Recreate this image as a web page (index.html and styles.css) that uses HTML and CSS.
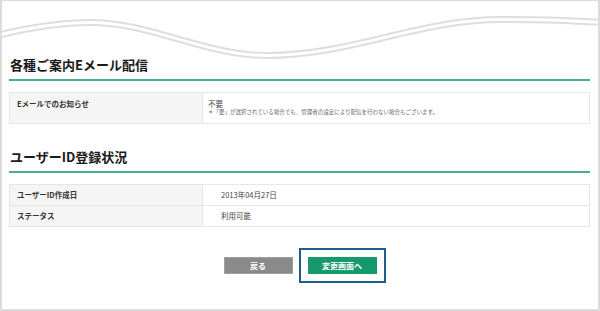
FILE: index.html
```html
<!DOCTYPE html>
<html lang="ja">
<head>
  <meta charset="UTF-8">
  <title>登録情報</title>
  <meta name="viewport" content="width=device-width, initial-scale=1">
  <link rel="stylesheet" href="styles.css">
</head>
<body>
  <div class="frame">
    <svg class="wave" viewBox="2 1 596 55" preserveAspectRatio="none" aria-hidden="true">
      <path d="M0,32 C30,25 60,20 90,20 C150,20 205,53 267,53 C350,53 420,17 500,17 C540,17 575,18 600,20" />
      <path d="M0,37.5 C30,30 60,25 90,25 C150,25 205,58 267,58 C350,58 420,22 500,22 C540,22 575,23 600,25" />
    </svg>

    <section class="block">
      <h2 class="heading">各種ご案内Eメール配信</h2>
      <table class="info mail">
        <tr>
          <th>Eメールでのお知らせ</th>
          <td>
            <p class="val">不要</p>
            <p class="note">＊「要」が選択されている場合でも、管理者の設定により配信を行わない場合もございます。</p>
          </td>
        </tr>
      </table>
    </section>

    <section class="block second">
      <h2 class="heading">ユーザーID登録状況</h2>
      <table class="info status">
        <tr>
          <th>ユーザーID作成日</th>
          <td>2013年04月27日</td>
        </tr>
        <tr>
          <th>ステータス</th>
          <td>利用可能</td>
        </tr>
      </table>
    </section>

    <div class="actions">
      <button class="btn back" type="button">戻る</button>
      <button class="btn next" type="button">変更画面へ</button>
    </div>
  </div>
</body>
</html>
```

FILE: styles.css
```css
body {
  margin: 0;
  font-family: "Noto Sans CJK JP", "Noto Sans", sans-serif;
  color: #222;
  background: #fff;
}
.frame {
  width: 600px;
  height: 311px;
  box-sizing: border-box;
  border: 2px solid #dcdcdc;
  border-top-width: 1px;
  overflow: hidden;
}
.wave {
  display: block;
  width: 596px;
  height: 55px;
  overflow: visible;
}
.wave path {
  fill: none;
  stroke: #dedede;
  stroke-width: 2;
}
.block {
  padding: 0 8px 0 7px;
}
.second {
  margin-top: 24px;
}
.heading {
  margin: 0;
  padding: 0 0 5px 1px;
  font-size: 13px;
  line-height: 18px;
  font-weight: 700;
  color: #1a1a1a;
  border-bottom: 2px solid #45ae8c;
}
.info {
  width: 100%;
  margin-top: 11px;
  border-collapse: collapse;
  font-size: 7.5px;
}
.info th,
.info td {
  border: 1px solid #e6e6e6;
  text-align: left;
  vertical-align: top;
}
.info th {
  width: 178px;
  padding: 6px 7px;
  background: #f5f5f5;
  font-weight: 700;
  color: #333;
  line-height: 9px;
}
.info td {
  color: #444;
}
.mail td {
  padding: 6px 5px 6px;
}
.mail p {
  margin: 0;
  line-height: 9px;
}
.mail .note {
  font-size: 5.5px;
  color: #666;
}
.status th,
.status td {
  padding-top: 5px;
  padding-bottom: 5px;
  line-height: 10px;
}
.status td {
  padding-left: 18px;
}
.actions {
  display: flex;
  justify-content: center;
  gap: 15px;
  margin-top: 30px;
}
.btn {
  width: 69px;
  height: 17px;
  padding: 0;
  border: none;
  font-family: inherit;
  font-size: 8px;
  font-weight: 700;
  color: #fff;
}
.back {
  background: #8a8a8a;
  border: 1px solid #a0a0a0;
}
.next {
  background: #169a6d;
  outline: 2px solid #1c5d8f;
  outline-offset: 7px;
}
```
